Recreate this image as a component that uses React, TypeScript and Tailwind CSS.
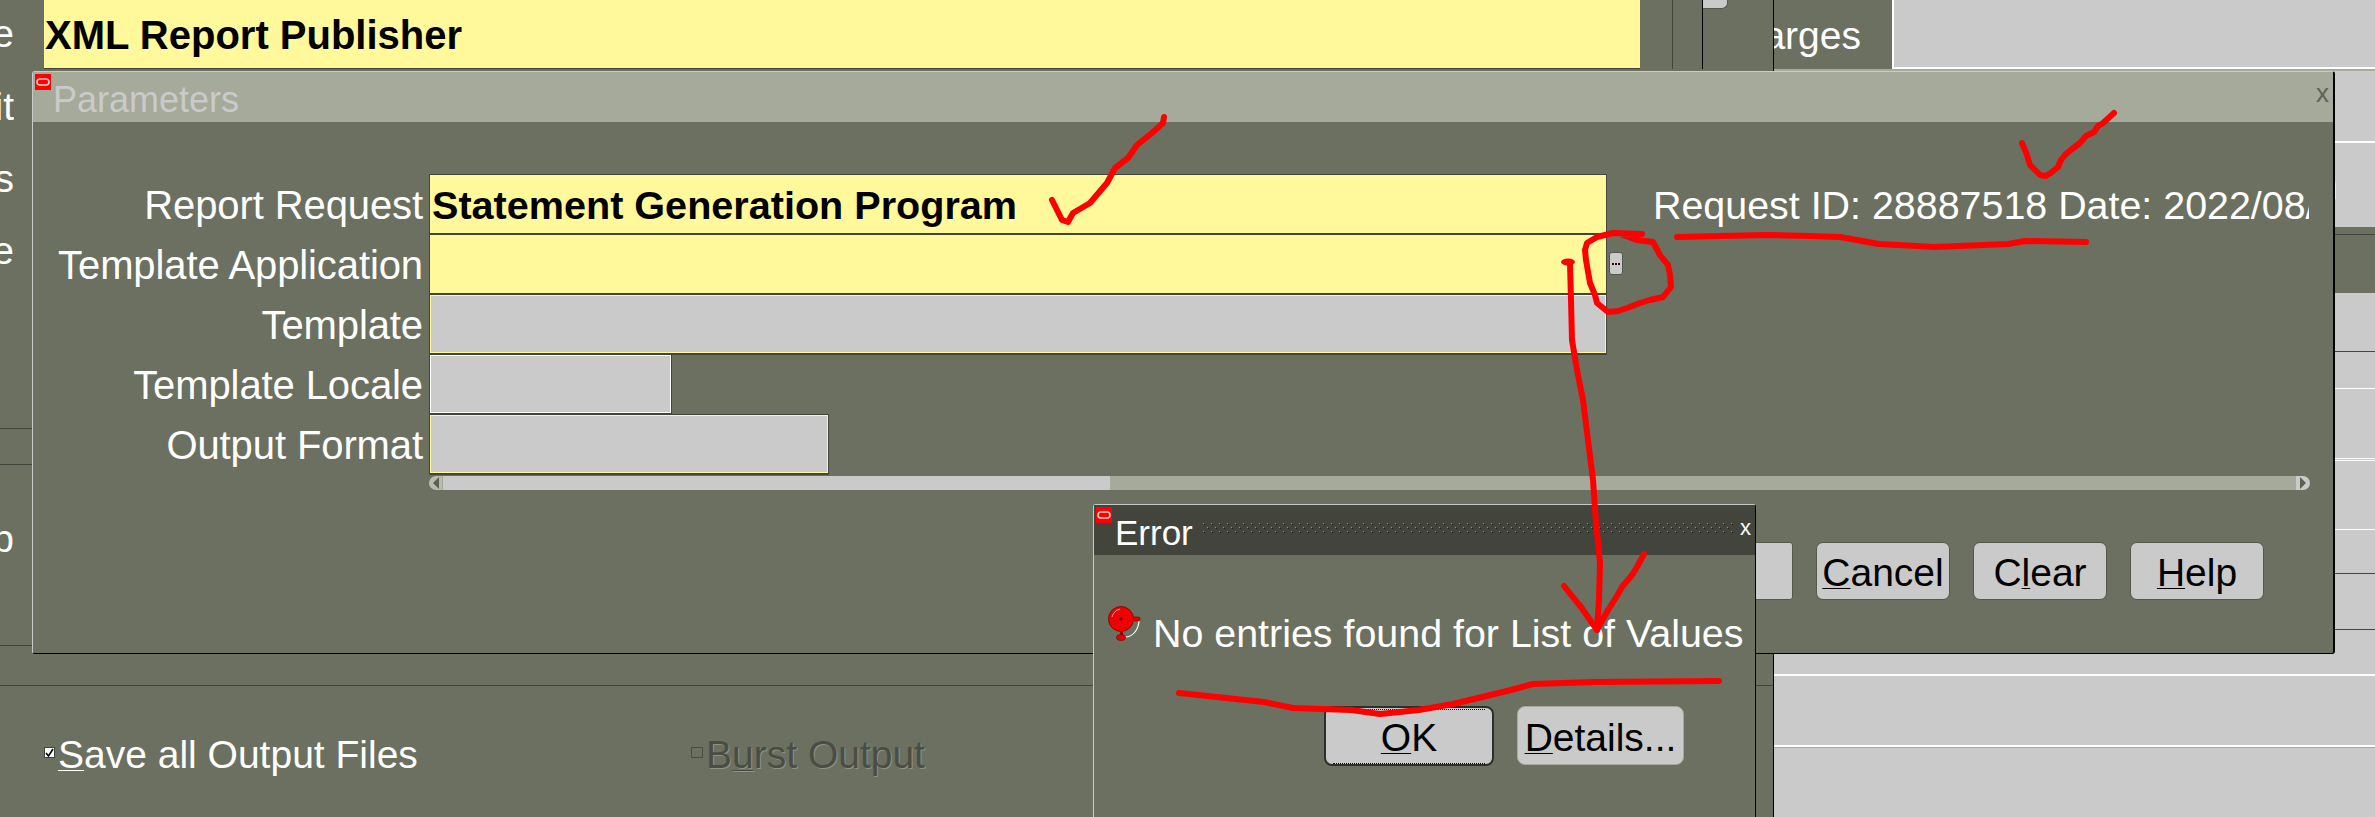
const rightRows = [
  { h: "h-[72px]", line: "border-b-2 border-white" },
  { h: "h-[84px]", line: "" },
];

const lowerRows = [
  { h: "h-[59px]", line: "border-b border-[#43453c]" },
  { h: "h-[37px]", line: "border-b border-white" },
  { h: "h-[70px]", line: "border-b border-white" },
  { h: "h-[2px]", line: "border-b border-white" },
  { h: "h-[69px]", line: "border-b border-white" },
  { h: "h-[44px]", line: "border-b border-[#43453c]" },
  { h: "h-[56px]", line: "border-b border-[#43453c]" },
  { h: "h-[46px]", line: "border-b-2 border-white" },
  { h: "h-[71px]", line: "border-b-2 border-white" },
];

const scribbles = [
  "1052,200 1057,210 1062,220 1068,222 1073,213 1090,203 1107,183 1115,168 1128,158 1137,145 1152,133 1163,123 1164,117",
  "2022,143 2025,150 2027,155 2030,165 2035,170 2040,175 2046,176 2052,172 2058,167 2061,160 2065,155 2072,149 2080,143 2086,136 2094,132 2098,126 2103,123 2114,113",
  "1677,237 1720,236 1768,235 1810,236 1840,237 1879,244 1935,247 2008,244 2025,241 2086,242",
  "1642,234 1613,233 1597,237 1587,243 1585,250 1586,260 1590,283 1595,295 1597,303 1608,312 1618,311 1627,308 1640,303 1650,300 1663,297 1671,287 1670,275 1668,265 1660,255 1653,242 1637,240 1623,235",
  "1570,263 1571,300 1572,340 1577,370 1583,400 1588,440 1593,480 1596,523 1600,563 1599,600 1597,630",
  "1564,586 1572,596 1581,607 1597,630 1608,610 1617,596 1622,587 1632,575 1637,567 1644,554",
  "1179,693 1264,702 1293,708 1351,710 1380,714 1419,710 1453,704 1511,690 1533,684 1593,682 1719,681",
];

function OracleMark() {
  return (
    <svg width="16" height="16" viewBox="0 0 16 16" className="mt-[2px] shrink-0">
      <rect width="16" height="16" fill="#ff0000" />
      <rect x="2" y="5" width="12" height="6" rx="3" fill="none" stroke="#ffc8c8" strokeWidth="1.6" />
    </svg>
  );
}

function Bell() {
  return (
    <svg width="33" height="36" viewBox="0 0 33 36" className="mt-[3px] shrink-0">
      <path d="M31 14 C31 22 26 31 17 31" fill="none" stroke="#ffffff" strokeWidth="1.2" />
      <rect x="25" y="11" width="7" height="4" rx="1.5" fill="#e00000" stroke="#700000" strokeWidth="0.6" />
      <rect x="12" y="25" width="3" height="5" fill="#a00000" />
      <ellipse cx="13" cy="31.5" rx="4.5" ry="3" fill="#e00000" stroke="#700000" strokeWidth="0.6" />
      <circle cx="13" cy="13" r="12.5" fill="#f00000" stroke="#700000" strokeWidth="0.8" />
      <path d="M4 11 C5 7 8 4 12 3" fill="none" stroke="#ff9a9a" strokeWidth="1" />
      <circle cx="13" cy="13" r="1.5" fill="#500000" />
    </svg>
  );
}

function Field({ tone, width }: { tone: "yellow" | "gray" | "plain"; width: string }) {
  const face =
    tone === "yellow"
      ? "bg-[#fff99c]"
      : tone === "gray"
        ? "bg-[#cacaca] shadow-[inset_0_0_0_1px_#fff99c]"
        : "bg-[#cacaca] shadow-[inset_0_0_0_1px_#ffffff]";
  return <div className={`h-[61px] shrink-0 rounded-[1px] border border-b-2 border-[#43453c] ${face} ${width}`} />;
}

function Label({ children }: { children: string }) {
  return (
    <div className="w-[390px] shrink-0 whitespace-nowrap pt-[1px] text-right text-[40px] tracking-[-0.1px] text-white">
      {children}
    </div>
  );
}

function Triangle({ dir }: { dir: "left" | "right" }) {
  return (
    <svg width="6" height="12" viewBox="0 0 6 12">
      <path d={dir === "left" ? "M6 0 L0 6 L6 12 Z" : "M0 0 L6 6 L0 12 Z"} fill="#5c6052" />
    </svg>
  );
}

export default function App() {
  return (
    <div className="relative h-[817px] w-[2375px] overflow-hidden bg-[#6b7060] font-['Liberation_Sans',sans-serif] text-[39px] leading-[60px]">
      {/* form behind the dialogs */}
      <div className="flex h-[69px]">
        <div className="flex h-full w-[44px] shrink-0">
          <div className="mt-[4px] flex h-[60px] w-[14px] justify-end overflow-hidden text-white">e</div>
        </div>
        <div className="h-[69px] w-[1596px] shrink-0 border-b border-[#43453c] bg-[#fff99c] pl-[1px] pt-[5px] text-[40px] font-bold whitespace-nowrap text-black">
          XML Report Publisher
        </div>
        <div className="ml-[32px] h-full w-[30px] shrink-0 border-l border-[#43453c]" />
        <div className="h-full w-[71px] shrink-0 border-l border-black">
          <div className="h-[9px] w-[25px] rounded-br-[6px] border-b border-r border-[#54574b] bg-[#cacaca]" />
        </div>
        <div className="flex h-full w-[119px] shrink-0 justify-end overflow-hidden border-l border-black pr-[31px] pt-[6px] text-white">
          Charges
        </div>
        <div className="h-[69px] flex-1 border-b-2 border-l-2 border-white bg-[#cacaca]" />
      </div>

      <div className="flex h-[748px]">
        <div className="flex w-[1773px] shrink-0 flex-col">
          <div className="flex h-[360px] flex-col border-b border-[#43453c] pt-[8px] text-white">
            {["it", "s", "e"].map((t) => (
              <div key={t} className="flex h-[72px] w-[14px] justify-end overflow-hidden">
                {t}
              </div>
            ))}
          </div>
          <div className="h-[36px] border-b border-[#43453c]" />
          <div className="h-[181px] border-b border-[#43453c] pt-[44px] text-white">
            <div className="flex h-[60px] w-[14px] justify-end overflow-hidden">p</div>
          </div>
          <div className="h-[40px] border-b border-[#43453c]" />
          <div className="flex pl-[44px] pt-[39px]">
            <div className="flex w-[647px] shrink-0 items-start gap-[3px] text-white">
              <div className="mt-[22px] flex h-[11px] w-[11px] items-center justify-center border border-[#43453c] bg-white">
                <svg width="9" height="9" viewBox="0 0 9 9">
                  <path d="M1 5 L3.5 8 L8 1" fill="none" stroke="#000000" strokeWidth="1.6" />
                </svg>
              </div>
              <div>
                <span className="underline decoration-1 underline-offset-2">S</span>ave all Output Files
              </div>
            </div>
            <div className="flex items-start gap-[3px] text-[#4b4d44] [text-shadow:1px_1px_0_#8f9384]">
              <div className="mt-[22px] h-[11px] w-[12px] border border-[#4b4d44]" />
              <div>
                B<span className="underline decoration-1 underline-offset-2">u</span>rst Output
              </div>
            </div>
          </div>
        </div>

        <div className="flex-1 border-l border-black bg-[#cacaca]">
          <div className="h-[2px] bg-[#a5aa9b]" />
          {rightRows.map((r) => (
            <div key={r.h} className={`flex justify-end pr-[37px] text-white ${r.h} ${r.line}`}>
              {r.h === "h-[84px]" && <span className="pt-[13px]">n</span>}
            </div>
          ))}
          <div className="h-[66px] bg-[#6b7060]">
            <div className="h-[8px] border-b border-[#43453c]" />
          </div>
          {lowerRows.map((r) => (
            <div key={r.h + r.line} className={`${r.h} ${r.line}`} />
          ))}
          <div className="h-[1px] bg-[#a5aa9b]" />
        </div>
      </div>

      {/* Parameters window */}
      <div className="absolute left-[32px] top-[71px] h-[583px] w-[2303px] rounded-[3px] border-b border-l border-r-2 border-t border-b-black border-l-[#cacaca] border-r-black border-t-[#cacaca] bg-[#6b7060]">
        <div className="flex h-[50px] bg-[#a5aa9b] pl-[2px] text-[36px] leading-[50px] text-[#cacaca]">
          <OracleMark />
          <span className="ml-[2px] pt-[3px]">Parameters</span>
          <span className="ml-auto mr-[4px] pt-[2px] text-[26px] leading-[38px] text-[#5f6358]">x</span>
        </div>

        <div className="mt-[52px] flex flex-col">
          <div className="flex h-[60px] items-start gap-[6px]">
            <Label>Report Request</Label>
            <div className="h-[61px] w-[1178px] shrink-0 rounded-[1px] border border-b-2 border-[#43453c] bg-[#fff99c] pl-[2px] text-[39.6px] font-bold leading-[60px] whitespace-nowrap text-black">
              Statement Generation Program
            </div>
            <div className="ml-[40px] w-[656px] overflow-hidden whitespace-nowrap pt-[1px] text-[39.4px] text-white">
              Request ID: 28887518 Date: 2022/08/
            </div>
          </div>
          <div className="flex h-[60px] items-start gap-[6px]">
            <Label>Template Application</Label>
            <Field tone="yellow" width="w-[1178px]" />
            <div className="-ml-[4px] mt-[18px] flex h-[23px] w-[14px] items-center justify-center gap-[1px] rounded-[3px] border border-[#54574b] bg-[#cacaca]">
              <span className="h-[2px] w-[2px] bg-[#400000]" />
              <span className="h-[2px] w-[2px] bg-[#400000]" />
              <span className="h-[2px] w-[2px] bg-[#400000]" />
            </div>
          </div>
          <div className="flex h-[60px] items-start gap-[6px]">
            <Label>Template</Label>
            <Field tone="gray" width="w-[1178px]" />
          </div>
          <div className="flex h-[60px] items-start gap-[6px]">
            <Label>Template Locale</Label>
            <Field tone="plain" width="w-[243px]" />
          </div>
          <div className="flex h-[60px] items-start gap-[6px]">
            <Label>Output Format</Label>
            <Field tone="gray" width="w-[400px]" />
          </div>
        </div>

        <div className="ml-[396px] mt-[2px] flex h-[14px] w-[1881px]">
          <div className="flex w-[14px] items-center justify-center rounded-l-[7px] border-r border-[#a5aa9b] bg-[#b9bbae]">
            <Triangle dir="left" />
          </div>
          <div className="w-[667px] bg-[#cacaca]" />
          <div className="flex-1 bg-[#a5aa9b]" />
          <div className="flex w-[14px] items-center justify-center rounded-r-[7px] bg-[#cacaca]">
            <Triangle dir="right" />
          </div>
        </div>

        <div className="ml-[1627px] mt-[52px] flex gap-[23px] text-center text-black">
          <div className="h-[58px] w-[133px] rounded-[3px] border border-[#54574b] bg-[#cacaca] leading-[58px]">OK</div>
          <div className="h-[58px] w-[134px] rounded-[7px] border border-[#54574b] bg-[#cacaca] leading-[60px]">
            <span className="underline decoration-1 underline-offset-2">C</span>ancel
          </div>
          <div className="h-[58px] w-[134px] rounded-[7px] border border-[#54574b] bg-[#cacaca] leading-[60px]">
            C<span className="underline decoration-1 underline-offset-2">l</span>ear
          </div>
          <div className="h-[58px] w-[134px] rounded-[7px] border border-[#54574b] bg-[#cacaca] leading-[60px]">
            <span className="underline decoration-1 underline-offset-2">H</span>elp
          </div>
        </div>
      </div>

      {/* Error dialog */}
      <div className="absolute left-[1093px] top-[504px] h-[330px] w-[663px] rounded-t-[3px] border-l border-r border-t border-l-[#cacaca] border-r-black border-t-[#cacaca] bg-[#6b7060]">
        <div className="flex h-[50px] items-start bg-[#43453c] pl-[2px] text-[35px] leading-[50px] text-white">
          <OracleMark />
          <span className="ml-[3px] w-[88px] pt-[3px]">Error</span>
          <svg width="532" height="12" className="mt-[18px] shrink-0">
            <defs>
              <pattern id="grip" width="8" height="8" patternUnits="userSpaceOnUse">
                <rect x="0" y="0" width="1" height="1" fill="#8f9384" />
                <rect x="1" y="1" width="1" height="1" fill="#1e1f1a" />
                <rect x="4" y="4" width="1" height="1" fill="#8f9384" />
                <rect x="5" y="5" width="1" height="1" fill="#1e1f1a" />
              </pattern>
            </defs>
            <rect width="532" height="12" fill="url(#grip)" />
          </svg>
          <span className="ml-[5px] text-[22px] leading-[46px] text-white">x</span>
        </div>
        <div className="mt-[48px] flex items-start gap-[12px] pl-[14px]">
          <Bell />
          <div className="whitespace-nowrap text-[39.4px] text-white">No entries found for List of Values</div>
        </div>
        <div className="ml-[230px] mt-[43px] flex items-start gap-[23px] text-center text-black">
          <div className="h-[60px] w-[170px] rounded-[8px] border-2 border-[#2e2f29] bg-[#cacaca]">
            <div className="mx-[7px] mt-[1px] h-[55px] border-y border-dotted border-black leading-[56px]">
              <span className="underline decoration-1 underline-offset-2">O</span>K
            </div>
          </div>
          <div className="h-[59px] w-[167px] rounded-[8px] border border-[#a5aa9b] bg-[#cacaca] leading-[61px]">
            <span className="underline decoration-1 underline-offset-2">D</span>etails...
          </div>
        </div>
      </div>

      {/* red pen marks on top of the screenshot */}
      <svg width="2375" height="817" viewBox="0 0 2375 817" className="pointer-events-none absolute left-0 top-0">
        {scribbles.map((points) => (
          <polyline
            key={points}
            points={points}
            fill="none"
            stroke="#ff0000"
            strokeWidth="6"
            strokeLinecap="round"
            strokeLinejoin="round"
          />
        ))}
        <ellipse cx="1568" cy="262" rx="7" ry="3.5" fill="#ff0000" />
      </svg>
    </div>
  );
}
